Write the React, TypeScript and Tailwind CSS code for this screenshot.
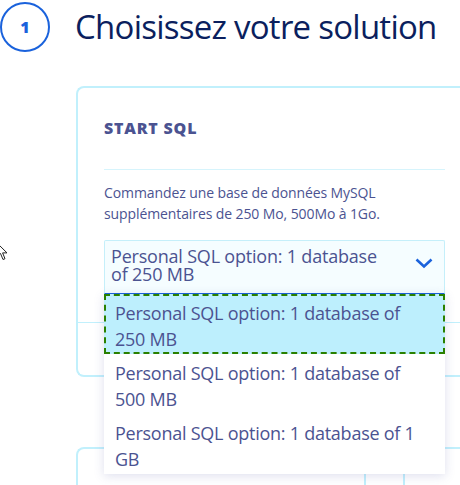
export default function App() {
  const options = [
    "Personal SQL option: 1 database of 250 MB",
    "Personal SQL option: 1 database of 500 MB",
    "Personal SQL option: 1 database of 1 GB",
  ];

  return (
    <div
      className="relative w-[460px] h-[485px] overflow-hidden bg-white"
      style={{ fontFamily: '"Open Sans", "Liberation Sans", sans-serif' }}
    >
      {/* step header */}
      <div className="flex items-center pt-[2px]">
        <div className="w-[50px] h-[50px] shrink-0 rounded-full border-2 border-[#1a62dc] flex items-center justify-center text-[16px] font-extrabold text-[#1a62dc]">
          1
        </div>
        <h1 className="ml-[25px] text-[33px] leading-[40px] tracking-[-0.75px] text-[#0b1f5e] whitespace-nowrap">
          Choisissez votre solution
        </h1>
      </div>

      {/* first card */}
      <div className="ml-[76px] mt-[34px] w-[400px] border-2 border-r-0 border-[#c1f0fc] rounded-l-[8px]">
        <div className="pl-[26px] pt-[30px] w-[367px]">
          <h2 className="text-[16px] leading-[20px] font-extrabold text-[#4b5391] tracking-[0.8px]">
            START SQL
          </h2>
          <div className="mt-[31px] h-px bg-[#d6f4fc]" />
          <p className="mt-[12px] text-[14px] leading-[21px] text-[#4b5391] tracking-[-0.1px]">
            Commandez une base de données MySQL
            <br />
            supplémentaires de 250 Mo, 500Mo à 1Go.
          </p>
          <div className="mt-[16px] h-[54px] bg-[#f5fdff] border border-[#c5effa] border-b-[#1a62dc] rounded-t-[2px] flex items-start justify-between pl-[6px] pr-[11px] pt-[6px]">
            <span className="text-[18px] leading-[18px] text-[#4b5391] tracking-[-0.2px] w-[282px]">
              Personal SQL option: 1 database of 250 MB
            </span>
            <svg width="18" height="11" viewBox="0 0 18 11" className="mt-[11px]">
              <path d="M1.5 1.5 L9 8.5 L16.5 1.5" fill="none" stroke="#1a62dc" strokeWidth="2.6" />
            </svg>
          </div>
        </div>
        <div className="mt-[28px] h-px bg-[#c1f0fc]" />
        <div className="h-[52px]" />
      </div>

      {/* second card */}
      <div className="ml-[76px] mt-[70px] w-[400px] h-[60px] border-2 border-r-0 border-b-0 border-[#c1f0fc] rounded-tl-[8px] flex">
        <div className="ml-[286px] mt-[10px] w-[41px] border-x-2 border-[#c1f0fc]" />
      </div>

      {/* open dropdown list */}
      <ul className="absolute left-[104px] top-[294px] w-[341px] bg-white shadow-[0_2px_10px_rgba(70,80,160,0.18)]">
        {options.map((o, i) => (
          <li
            key={o}
            className={
              i === 0
                ? "h-[60px] pl-[9px] pr-[16px] pt-[4px] bg-[#bdeffd] border-2 border-dashed border-[#2a8000] text-[18px] leading-[26px] text-[#4b5391] tracking-[-0.25px]"
                : "h-[60px] pl-[11px] pr-[18px] pt-[6px] text-[18px] leading-[26px] text-[#4b5391] tracking-[-0.25px]"
            }
          >
            {o}
          </li>
        ))}
      </ul>

      {/* mouse pointer at the left edge */}
      <svg width="12" height="20" viewBox="0 0 12 20" className="absolute left-[-4px] top-[242px]">
        <path d="M1 1 L1 15 L4.5 11.5 L7 17.5 L9 16.7 L6.6 10.9 L11 10.9 Z" fill="#fff" stroke="#222" strokeWidth="1" />
      </svg>
    </div>
  );
}
